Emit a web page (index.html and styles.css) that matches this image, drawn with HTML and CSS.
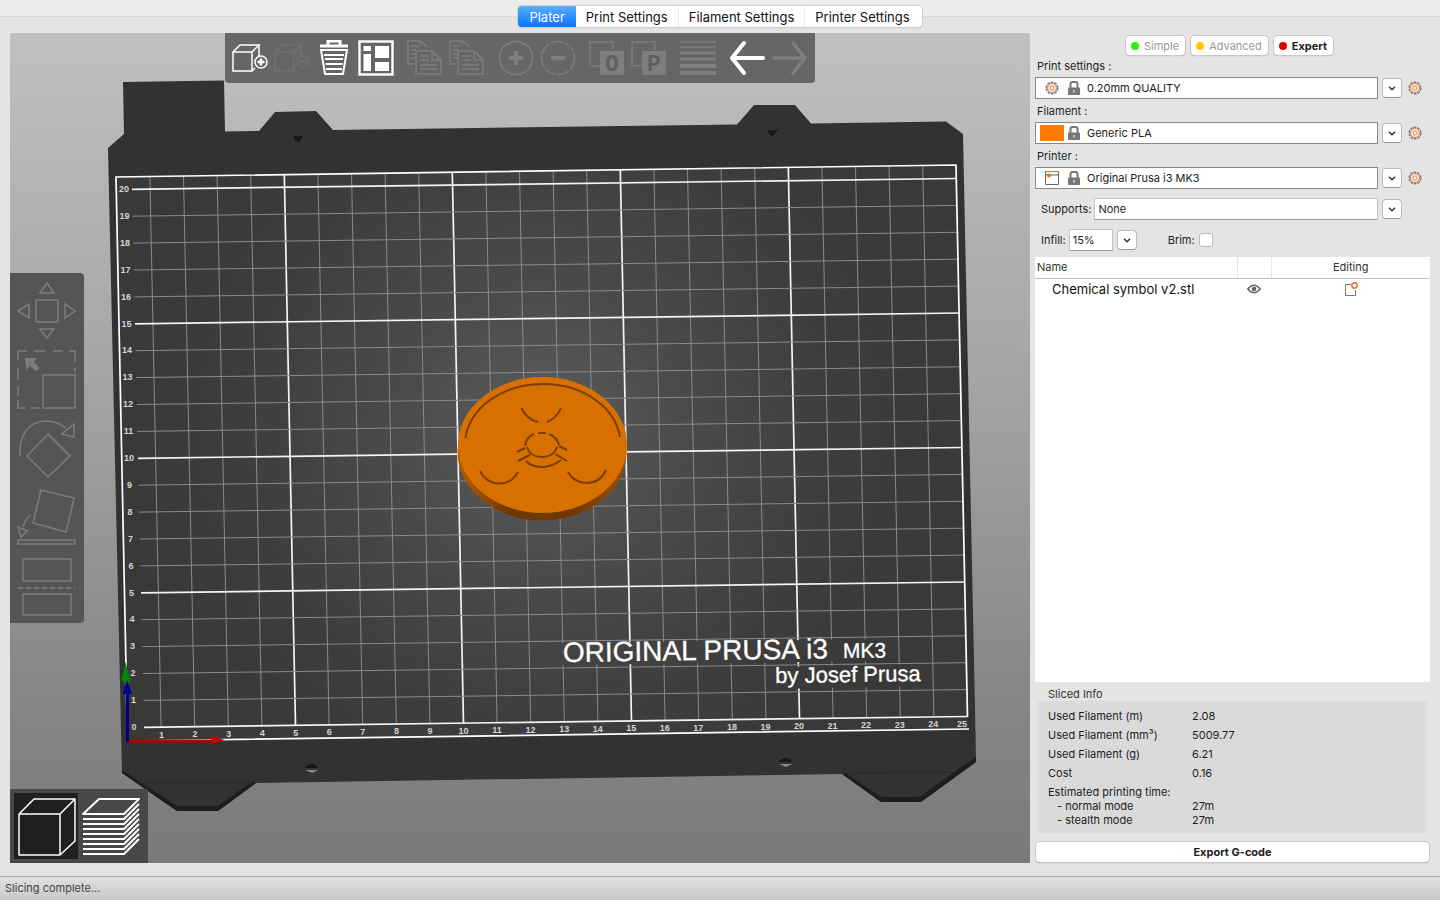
FILE: index.html
```html
<!DOCTYPE html>
<html lang="en">
<head>
<meta charset="utf-8">
<title>Plater</title>
<link rel="stylesheet" href="styles.css">
</head>
<body>
<svg class="defs" aria-hidden="true">
  <symbol id="gear" viewBox="0 0 14 14">
    <circle cx="7" cy="7" r="5.800" fill="#f8e3d6" stroke="#777" stroke-width="1.400" stroke-dasharray="2.700 .9"/>
    <circle cx="7" cy="7" r="4.500" fill="none" stroke="#e0875a" stroke-width="1"/>
    <circle cx="7" cy="7" r="2" fill="#fff" stroke="#e0875a" stroke-width="1"/>
  </symbol>
  <symbol id="lock" viewBox="0 0 14 14">
    <path d="M3.500 7V3.200Q3.500 1 5.500 1H8.500Q10.500 1 10.500 3.200V7" fill="none" stroke="#777" stroke-width="2"/>
    <rect x="1" y="6.500" width="12" height="7.500" rx="1" fill="#777"/>
    <path d="M7 9v2.500" stroke="#ddd" stroke-width="1.500"/>
  </symbol>
  <symbol id="chevron" viewBox="0 0 10 10">
    <path d="M2 3.700 5 6.700 8 3.700" fill="none" stroke="#333" stroke-width="1.500"/>
  </symbol>
  <symbol id="page-stack" viewBox="0 0 36 36">
    <path d="M7 24H1V1H14L20 7M13 1V5M4 6H12M4 10H9M4 14H9M4 18H9" />
    <path d="M9 11H25L34 20V34H9ZM25 11V20H34M13 16H22M13 20H22M13 25H30M13 29H30"/>
  </symbol>
</svg>

<nav class="tabbar">
  <div class="tabs" role="tablist">
    <button class="tab tab-active" role="tab" aria-selected="true">Plater</button>
    <button class="tab" role="tab">Print Settings</button>
    <button class="tab" role="tab">Filament Settings</button>
    <button class="tab" role="tab">Printer Settings</button>
  </div>
</nav>

<main class="plater">
  <section class="viewport" aria-label="3D view">
    <svg class="scene" viewBox="10 33 1020 830" preserveAspectRatio="xMidYMid meet">
      <defs>
        <radialGradient id="glow" gradientUnits="userSpaceOnUse" cx="540" cy="430" r="400">
          <stop offset="0" stop-color="#5d5d5d"/>
          <stop offset=".35" stop-color="#4b4b4b"/>
          <stop offset=".75" stop-color="#3d3d3d"/>
          <stop offset="1" stop-color="#393939"/>
        </radialGradient>
        <linearGradient id="side" x1="0" x2="1" y1="0" y2="0">
          <stop offset="0" stop-color="#b85c00"/>
          <stop offset=".3" stop-color="#6e3800"/>
          <stop offset=".7" stop-color="#6e3800"/>
          <stop offset="1" stop-color="#a05000"/>
        </linearGradient>
        <mask id="logo-gap" maskUnits="userSpaceOnUse" x="0" y="0" width="1100" height="900">
          <rect width="1100" height="900" fill="#fff"/>
          <path d="M562 643 890 639V661L562 665ZM773 667 924 664V686L773 689Z" fill="#000"/>
        </mask>
      </defs>
      <path class="bed" d="M123 82 224 80.500 225 131.500 259 131 275 112 316 111 333 130 737 124.500 754 105 795 105 811 123.500 946 121.500 963 134 976 757V762L921 802 881 802 842 774 256 783 218 811 177 811 122 773 108 148 124 134Z"/>
      <path d="M122 770 177 806H218L253 781 256 783 218 811H177L122 773ZM842 774 847 774 881 797H919L976 757V762L921 802H881Z" fill="#1d1d1d"/>
      <path d="M137 783 250 782M845 773 957 772" stroke="#292929"/>
      <path d="M116 177 956 165 968 729 127 741Z" fill="url(#glow)"/>
      <g id="grid" mask="url(#logo-gap)"></g>
      <path d="M127.500 741 116 177 956 165 967.500 717M128 741 969 729" fill="none" stroke="#fff" stroke-width="1.700"/>
      <g id="scale" class="scale"></g>
      <g class="logo" transform="rotate(-.8 564 662)">
        <text x="563" y="662" font-size="28">ORIGINAL PRUSA i3</text>
        <text x="843" y="662" font-size="21">MK3</text>
        <text x="775" y="686" font-size="22">by Josef Prusa</text>
      </g>
      <g fill="#161616">
        <path d="M293 135q5 3 10 0l-2 5-3 2-3-2zM767 129q5 3 11 0l-3 5-3 2-3-2z"/>
        <path d="M305 768a7 6 0 0 1 13 0zM779 762a7 6 0 0 1 13 0z"/>
        <path d="M305 770h13l-6 3zM779 764h13l-6 3z" fill="#888"/>
      </g>
      <ellipse cx="542" cy="452" rx="84.500" ry="68.500" fill="url(#side)"/>
      <ellipse cx="542.500" cy="445" rx="84.500" ry="68" fill="#d87000"/>
      <g fill="none" stroke="#7a3e00" stroke-width="2">
        <path d="M465.500 438C470 407 503 384 543 384S615 407 620 437"/>
        <path d="M521.500 408Q526 419 538 422M547 422Q557 418 561 408"/>
        <path d="M480 471Q486 483 498.500 483.500T518 472M568 472Q574 483 587 483T606 470"/>
        <path d="M525 446Q526 437 534 434M538 433 546 433M549 434Q557 437 559 445M527 447Q530 457 542 457T557 447"/>
        <path d="M526 461Q532 467 542 467T561 460M517 452 525 448M518 461 530 455M559 446 567 450M555 454 567 461"/>
      </g>
      <g>
        <path d="M128 741H215" stroke="#b00000" stroke-width="3"/>
        <path d="M211 736 225 740 211 744Z" fill="#c80000"/>
        <path d="M125.500 662 121.500 680 127 686 130 680Z" fill="#008a00"/>
        <path d="M127.500 742V692" stroke="#00007c" stroke-width="3"/>
        <path d="M127 680 122.500 694H132Z" fill="#00008c"/>
      </g>
    </svg>

    <div class="toolbar" role="toolbar" aria-label="Objects">
      <div class="tool-group">
        <button class="tool" aria-label="Add"><svg viewBox="0 0 36 36"><path d="M1 12H20V31H1ZM1 12 8 5H27L20 12M27 5V17M20 31 23 28" stroke-width="1.500"/><circle cx="29" cy="22" r="6" stroke-width="1.500"/><path d="M29 18.500V25.500M25.500 22H32.500" stroke-width="2.400"/></svg></button>
        <button class="tool tool-faint" aria-label="Delete" disabled><svg viewBox="0 0 36 36"><path d="M1 12H20V31H1ZM1 12 8 5H27L20 12M27 5V17" stroke-width="1.500"/><circle cx="29" cy="22" r="6"/><path d="M25 22H33"/></svg></button>
        <button class="tool" aria-label="Delete all"><svg viewBox="0 0 36 36"><path d="M4 6H32M12 6V1H24V6" stroke-width="3"/><path d="M5 10H31L27 34H9ZM8 15H28M9 19H27M9.500 24H26.500M10 29H26" stroke-width="2"/></svg></button>
        <button class="tool" aria-label="Arrange"><svg viewBox="0 0 36 36"><rect x="1.500" y="1.500" width="33" height="33" stroke-width="2.400"/><path d="M5.500 6H13V11H5.500ZM5.500 14H13V31H5.500ZM17 6H31V18H17ZM17 22H31V31H17Z" fill="currentColor" stroke="none"/></svg></button>
      </div>
      <div class="tool-group tool-off">
        <button class="tool" aria-label="Copy" disabled><svg viewBox="0 0 36 36"><use href="#page-stack"/></svg></button>
        <button class="tool" aria-label="Paste" disabled><svg viewBox="0 0 36 36"><use href="#page-stack"/></svg></button>
      </div>
      <div class="tool-group tool-off">
        <button class="tool" aria-label="Add instance" disabled><svg viewBox="0 0 36 36"><circle cx="18" cy="18" r="16.500"/><path d="M18 11V25M11 18H25" stroke-width="4.500"/></svg></button>
        <button class="tool" aria-label="Remove instance" disabled><svg viewBox="0 0 36 36"><circle cx="18" cy="18" r="16.500" stroke-dasharray="12 2"/><path d="M11 18H25" stroke-width="4.500"/></svg></button>
      </div>
      <div class="tool-group tool-off">
        <button class="tool" aria-label="Split to objects" disabled><svg viewBox="0 0 36 36"><path d="M11 26H1V2H24V10"/><rect x="11" y="11" width="24" height="24" fill="currentColor" stroke="none"/><text x="23" y="31" class="tool-letter">O</text></svg></button>
        <button class="tool" aria-label="Split to parts" disabled><svg viewBox="0 0 36 36"><path d="M11 26H1V2H24V10"/><rect x="11" y="11" width="24" height="24" fill="currentColor" stroke="none"/><text x="23" y="31" class="tool-letter">P</text></svg></button>
      </div>
      <div class="tool-group tool-off">
        <button class="tool" aria-label="Layer heights" disabled><svg viewBox="0 0 36 36"><path d="M0 2H36M0 7H36" stroke-width="1.500"/><path d="M0 13H36M0 19H36" stroke-width="3"/><path d="M0 26H36M0 33H36" stroke-width="4"/></svg></button>
      </div>
      <div class="tool-group">
        <button class="tool" aria-label="Undo"><svg viewBox="0 0 36 36"><path d="M15 3 3 18 15 33M3 18H34" stroke-width="4" stroke-linecap="round" stroke-linejoin="round"/></svg></button>
        <button class="tool tool-off" aria-label="Redo" disabled><svg viewBox="0 0 36 36"><path d="M22 3 34 18 22 33M34 18H3" stroke-width="3.500" stroke-linecap="round" stroke-linejoin="round"/></svg></button>
      </div>
    </div>

    <div class="gizmos" role="toolbar" aria-label="Manipulation">
      <button class="gizmo" aria-label="Move" disabled><svg viewBox="0 0 60 60"><rect x="19" y="19" width="22" height="22" rx="1"/><path d="M30 2 37 12H23ZM30 57 37 48H23ZM1 30 12 23V37ZM58 30 48 23V37Z"/></svg></button>
      <button class="gizmo" aria-label="Scale" disabled><svg viewBox="0 0 60 60"><path d="M1 10V1H10M17 1H28M36 1H46M52 1H58V12M1 18V30M1 36V46M1 50V58H8M14 58H22M58 18V22"/><rect x="26" y="25" width="32" height="33"/><path d="M8 8H20L17 12 23 18 19 21 13 16 9 20Z" fill="currentColor" stroke="none"/></svg></button>
      <button class="gizmo" aria-label="Rotate" disabled><svg viewBox="0 0 60 60"><path d="M31 15 53 37 31 58 10 37ZM3 37C1 17 12 2 29 2Q40 2 49 9M57 5V18L45 15Z"/></svg></button>
      <button class="gizmo" aria-label="Place on face" disabled><svg viewBox="0 0 60 60"><path d="M24 2 57 10 49 44 16 35ZM14 27Q8 31 6 39M1 39 10 43 4 49Z"/><rect x="1" y="52" width="57" height="4"/></svg></button>
      <button class="gizmo" aria-label="Cut" disabled><svg viewBox="0 0 60 60"><rect x="6" y="2" width="48" height="22"/><rect x="6" y="37" width="48" height="21"/><path d="M1 31H58" stroke-dasharray="5 3"/></svg></button>
    </div>

    <div class="views">
      <button class="view view-active" aria-label="3D editor view"><svg viewBox="0 0 64 64"><path d="M5 20H46V61H5ZM5 20 20 5H61L46 20M61 5V47L46 61"/></svg></button>
      <button class="view" aria-label="Preview"><svg viewBox="0 0 64 64"><path d="M19 5H59L44 20H3ZM3 25H44L59 10M3 30H44L59 15M3 35H44L59 20M3 40H44L59 25M3 45H44L59 30M3 50H44L59 35M3 55H44L59 40M3 60H44L59 45" stroke-width="2"/></svg></button>
    </div>
  </section>

  <aside class="sidebar">
    <div class="modes">
      <button class="mode"><span class="dot dot-green"></span>Simple</button>
      <button class="mode"><span class="dot dot-yellow"></span>Advanced</button>
      <button class="mode mode-active"><span class="dot dot-red"></span>Expert</button>
    </div>

    <label class="preset-label" for="print">Print settings :</label>
    <div class="preset-row">
      <div class="combo">
        <svg class="preset-icon" viewBox="0 0 24 14"><use href="#gear" x="5" width="14" height="14"/></svg>
        <svg class="icon"><use href="#lock"/></svg>
        <select id="print"><option>0.20mm QUALITY</option></select>
      </div>
      <button class="drop" aria-label="Choose print settings"><svg><use href="#chevron"/></svg></button>
      <button class="cog" aria-label="Edit print settings"><svg><use href="#gear"/></svg></button>
    </div>

    <label class="preset-label" for="filament">Filament :</label>
    <div class="preset-row">
      <div class="combo">
        <span class="swatch"></span>
        <svg class="icon"><use href="#lock"/></svg>
        <select id="filament"><option>Generic PLA</option></select>
      </div>
      <button class="drop" aria-label="Choose filament"><svg><use href="#chevron"/></svg></button>
      <button class="cog" aria-label="Edit filament"><svg><use href="#gear"/></svg></button>
    </div>

    <label class="preset-label" for="printer">Printer :</label>
    <div class="preset-row">
      <div class="combo">
        <svg class="preset-icon" viewBox="0 0 24 14"><path d="M5.500 .5V13.500H18.500V.5M5.500 4H18.500" fill="none" stroke="#666"/><path d="M5 .5H19" stroke="#ed6b21"/><circle cx="9" cy="4.500" r="2" fill="#ed6b21"/></svg>
        <svg class="icon"><use href="#lock"/></svg>
        <select id="printer"><option>Original Prusa i3 MK3</option></select>
      </div>
      <button class="drop" aria-label="Choose printer"><svg><use href="#chevron"/></svg></button>
      <button class="cog" aria-label="Edit printer"><svg><use href="#gear"/></svg></button>
    </div>

    <div class="option-row">
      <label class="option-label" for="supports">Supports:</label>
      <div class="combo combo-soft"><select id="supports"><option>None</option></select></div>
      <button class="drop" aria-label="Choose supports"><svg><use href="#chevron"/></svg></button>
    </div>
    <div class="option-row">
      <label class="option-label" for="infill">Infill:</label>
      <input class="infill" id="infill" type="text" value="15%">
      <button class="drop" aria-label="Choose infill"><svg><use href="#chevron"/></svg></button>
      <label class="brim-label" for="brim">Brim:</label>
      <input class="brim" id="brim" type="checkbox">
    </div>

    <div class="objects">
      <table class="object-table">
        <thead><tr><th class="col-name" scope="col">Name</th><th class="col-eye" scope="col" aria-label="Visible"></th><th class="col-edit" scope="col">Editing</th></tr></thead>
        <tbody><tr>
          <td class="cell-name">Chemical symbol v2.stl</td>
          <td class="cell-icon"><svg viewBox="0 0 14 14"><path d="M.8 7Q7 -.5 13.200 7 7 14.500 .8 7Z" fill="none" stroke="#666" stroke-width="1.400"/><circle cx="7" cy="7" r="2.300" fill="#666"/></svg></td>
          <td class="cell-icon"><svg viewBox="0 0 14 14"><path d="M7 2.500H1.500V13.500H11.500V8" fill="none" stroke="#777"/><circle cx="10.500" cy="3.500" r="2.700" fill="#fff" stroke="#ed6b21" stroke-width="1.400"/></svg></td>
        </tr></tbody>
      </table>
    </div>

    <h2 class="info-title">Sliced Info</h2>
    <dl class="info">
      <dt>Used Filament (m)</dt><dd>2.08</dd>
      <dt>Used Filament (mm³)</dt><dd>5009.77</dd>
      <dt>Used Filament (g)</dt><dd>6.21</dd>
      <dt>Cost</dt><dd>0.16</dd>
      <dt class="info-times">Estimated printing time:<span>- normal mode</span><span>- stealth mode</span></dt>
      <dd class="info-times"><span>27m</span><span>27m</span></dd>
    </dl>
    <button class="export">Export G-code</button>
  </aside>
</main>
<footer class="status">Slicing complete...</footer>
<script src="scene.js"></script>
</body>
</html>
```

FILE: styles.css
```css
* { box-sizing: border-box; }

body {
  margin: 0;
  min-height: 100vh;
  display: flex;
  flex-direction: column;
  background: #ececec;
  color: #1c1c1c;
  font: 11px/14px Inter, "Liberation Sans", sans-serif;
}

button, input, select { font: inherit; color: inherit; margin: 0; padding: 0; }
.defs { position: absolute; width: 0; height: 0; }

/* Tabs */
.tabbar {
  display: flex;
  justify-content: center;
  padding: 6px 0;
  background: linear-gradient(#ececec 16px, #d8d8d8 16px, #d8d8d8 17px, #e4e4e4 17px);
}
.tabs {
  display: flex;
  height: 21px;
  border-radius: 4px;
  background: #fff;
  box-shadow: 0 0 0 1px #d0d0d0, 0 1px 1px #999;
}
.tab {
  border: 0;
  border-right: 1px solid #ececec;
  padding: 0 10px;
  background: none;
  font-size: 13px;
  color: #111;
}
.tab:last-child { border-right: 0; padding-right: 12px; }
.tab-active {
  border: 0;
  padding: 0 11px;
  border-radius: 4px 0 0 4px;
  background: linear-gradient(#5aaeff, #0a72ff);
  color: #fff;
}

.plater {
  flex: 1;
  display: grid;
  grid-template-columns: 1fr 395px;
  gap: 5px;
  padding: 0 10px 13px;
  background: #e4e4e4;
  border-bottom: 1px solid #aaa;
}

/* 3D view */
.viewport {
  position: relative;
  min-width: 0;
  background: linear-gradient(#c0c0c0, #a2a2a2 45%, #868686 80%, #7a7a7a);
}
.scene { display: block; width: 100%; height: 100%; }
.bed { fill: #323232; }
.scale { font: bold 9px "Liberation Sans", Arial, sans-serif; fill: #d4d4d4; text-anchor: middle; }
.logo { font-family: "Liberation Sans", Arial, sans-serif; fill: #fff; stroke: #fff; stroke-width: .3px; }
.line { stroke: #8a8a8a; stroke-width: 1px; }
.line-major { stroke: #f4f4f4; stroke-width: 1.7px; }

.toolbar {
  position: absolute;
  top: 0;
  left: 50%;
  transform: translateX(-50%);
  display: flex;
  gap: 7px;
  padding: 7px 5px 7px 4px;
  border-radius: 0 0 4px 4px;
  background: #666;
}
.tool-group { display: flex; }
.tool { border: 0; width: 42px; height: 36px; background: none; color: #fff; }
.tool svg { display: block; width: 36px; height: 36px; margin: 0 auto; fill: none; stroke: currentColor; stroke-width: 1.5px; }
.tool-off, .tool-off .tool { color: #7e7e7e; }
.tool-faint { color: #707070; }
.tool .tool-letter { font: bold 23px "Liberation Mono", monospace; fill: #606060; stroke: none; text-anchor: middle; }

.gizmos {
  position: absolute;
  top: 50%;
  left: 0;
  transform: translateY(-50%);
  display: flex;
  flex-direction: column;
  padding: 3px 0 2px;
  border-radius: 0 4px 4px 0;
  background: #555;
}
.gizmo { border: 0; width: 74px; height: 69px; padding: 4px 7px; background: none; color: #7c7c7c; }
.gizmo svg { display: block; width: 60px; height: 60px; fill: none; stroke: currentColor; stroke-width: 1.5px; }

.views {
  position: absolute;
  left: 0;
  bottom: 0;
  display: flex;
  gap: 2px;
  padding: 4px;
  background: #484848;
}
.view { border: 0; width: 64px; height: 66px; background: none; }
.view-active { background: #202020; }
.view svg { display: block; width: 64px; height: 64px; fill: none; stroke: #fff; stroke-width: 1.5px; stroke-linejoin: round; }

/* Sidebar */
.sidebar { display: flex; flex-direction: column; min-width: 0; padding-bottom: 1px; }
.modes { display: flex; justify-content: center; gap: 6px; padding: 3px 6px 0 0; margin-bottom: 3px; }
.mode {
  display: flex;
  align-items: center;
  gap: 5px;
  height: 19px;
  border: 0;
  border-radius: 4px;
  padding: 0 6px 0 5px;
  background: #fff;
  box-shadow: 0 0 0 1px #c8c8c8, 0 1px 1px #999;
  color: #999;
}
.mode-active { color: #222; font-weight: 700; }
.dot { width: 8px; height: 8px; border-radius: 50%; }
.dot-green { background: #30f010; }
.dot-yellow { background: #ffc800; }
.dot-red { background: #e00000; }

.preset-label { padding: 1px 2px 0; height: 19px; }
.preset-row { display: flex; align-items: center; margin-bottom: 4px; }
.combo {
  flex: 1;
  min-width: 0;
  display: flex;
  align-items: center;
  gap: 3px;
  height: 22px;
  padding-left: 4px;
  border: 1px solid #888;
  background: #fff;
}
.combo select {
  appearance: none;
  flex: 1;
  min-width: 0;
  height: 20px;
  margin-left: 3px;
  border: 0;
  background: none;
}
.combo-soft { border-color: #c4c4c4 #c4c4c4 #999; padding-left: 0; }
.preset-icon { width: 24px; height: 14px; }
.icon { width: 14px; height: 14px; }
.swatch { width: 24px; height: 16px; background: #ff7a00; }
.drop {
  display: grid;
  place-items: center;
  width: 20px;
  height: 20px;
  margin-left: 4px;
  border: 1px solid #bbb;
  border-bottom-color: #999;
  border-radius: 4px;
  background: #fff;
}
.drop svg { width: 10px; height: 10px; }
.cog { width: 14px; height: 14px; margin: 0 8px 0 6px; border: 0; background: none; }
.cog svg { display: block; width: 14px; height: 14px; }

.option-row { display: flex; align-items: center; height: 22px; margin-top: 5px; padding: 0 28px 0 6px; }
.option-row + .option-row { margin-top: 9px; }
.option-label { padding-right: 3px; }
.infill { width: 44px; height: 22px; padding-left: 3px; border: 1px solid #c4c4c4; border-bottom-color: #999; background: #fff; }
.brim-label { margin-left: 31px; padding-right: 4px; }
.brim { appearance: none; width: 14px; height: 14px; border: 1px solid #bbb; border-radius: 3px; background: #fff; }

.objects { flex: 1; margin-top: 6px; background: #fff; }
.object-table { width: 100%; border-collapse: collapse; table-layout: fixed; }
.object-table th { height: 21px; padding: 0 2px; border-bottom: 1px solid #c4c4c4; font-weight: 400; color: #333; }
.object-table .col-name { width: 202px; text-align: left; }
.object-table .col-eye { width: 34px; border-left: 1px solid #e6e6e6; border-right: 1px solid #e6e6e6; }
.object-table td { height: 22px; padding: 0; }
.object-table .cell-name { padding-left: 17px; font-size: 13px; color: #111; white-space: nowrap; }
.cell-icon svg { display: block; width: 14px; height: 14px; margin: 0 auto; }

.info-title { margin: 5px 13px 0; font-size: 11px; font-weight: 400; line-height: 14px; color: #333; }
.info {
  display: grid;
  grid-template-columns: 144px 1fr;
  row-gap: 5px;
  margin: 0 3px 9px;
  padding: 8px 10px 6px;
  border-radius: 3px;
  background: #dadada;
}
.info dd { margin: 0; }
.info span { display: block; }
.info dt span { padding-left: 9px; }
.info dd.info-times { padding-top: 14px; }
.export {
  height: 20px;
  margin: 0 1px;
  border: 0;
  border-radius: 4px;
  background: #fff;
  box-shadow: 0 0 0 1px #c8c8c8, 0 1px 1px #888;
  font-weight: 700;
}

.status { height: 23px; padding: 4px 5px; background: linear-gradient(#e0e0e0, #c8c8c8); color: #444; }
```

FILE: scene.js
```js
const NS = "http://www.w3.org/2000/svg";
const grid = document.getElementById("grid");
const scale = document.getElementById("scale");

function addLine(x1, y1, x2, y2, major) {
  const line = document.createElementNS(NS, "line");
  Object.entries({ x1, y1, x2, y2 }).forEach(([k, v]) => line.setAttribute(k, v));
  line.setAttribute("class", major ? "line-major" : "line");
  grid.append(line);
}

function addLabel(x, y, value) {
  const text = document.createElementNS(NS, "text");
  text.setAttribute("x", x);
  text.setAttribute("y", y);
  text.textContent = value;
  scale.append(text);
}

for (let k = 1; k < 25; k++) {
  addLine(116.3 + 33.6 * k, 177 - 0.48 * k, 127.5 + 33.6 * k, 727.5 - 0.44 * k, k % 5 === 0);
}
for (let k = 1; k <= 25; k++) {
  addLabel(k === 25 ? 962 : 128 + 33.55 * k, 738 - 0.44 * k, k);
}
for (let j = 0; j <= 20; j++) {
  addLine(144 - 0.6 * j, 727.3 - 26.9 * j, 967.5 - 0.55 * j, 716.5 - 26.9 * j, j % 5 === 0);
  addLabel(134 - 0.5 * j, 730 - 26.9 * j, j);
}
```
